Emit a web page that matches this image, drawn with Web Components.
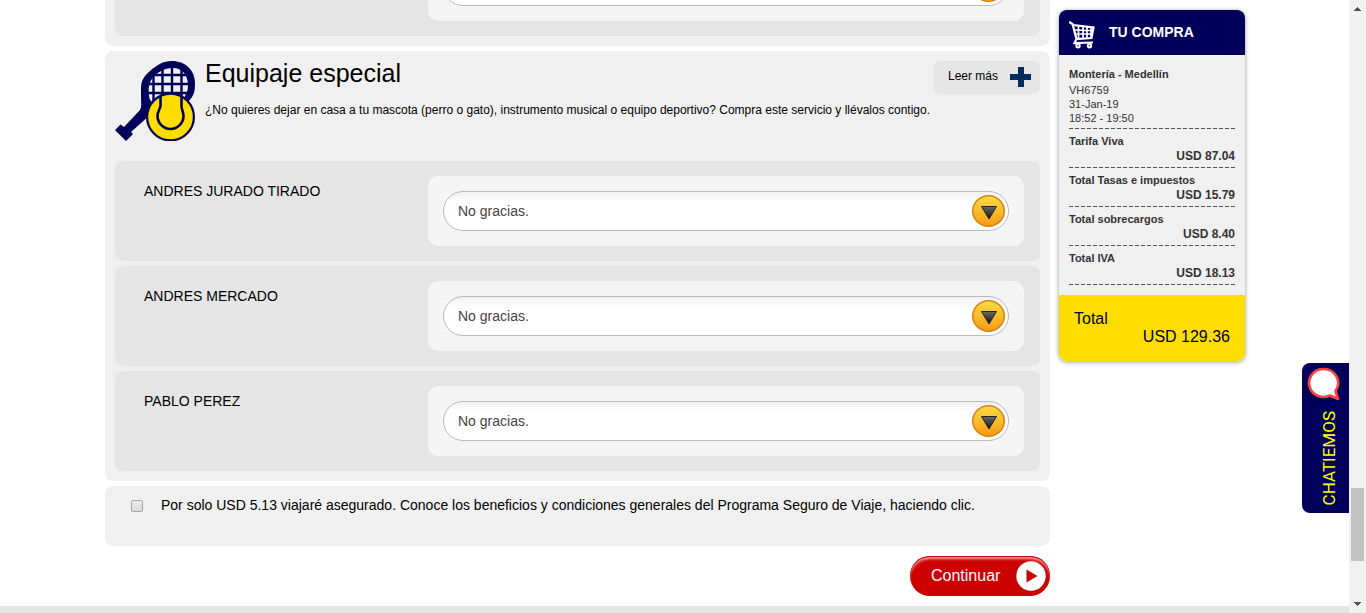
<!DOCTYPE html>
<html lang="es">
<head>
<meta charset="utf-8">
<title>Equipaje especial</title>
<style>
  body { margin: 0; background: #fff; color: #000; font-family: "Liberation Sans", Arial, sans-serif; font-size: 14px; }
</style>
</head>
<body>
<booking-page>
  <service-panel>
    <passenger-row></passenger-row>
  </service-panel>
  <service-panel>
    <service-header slot="header">
      <span slot="title">Equipaje especial</span>
      <span>¿No quieres dejar en casa a tu mascota (perro o gato), instrumento musical o equipo deportivo? Compra este servicio y llévalos contigo.</span>
    </service-header>
    <passenger-row>ANDRES JURADO TIRADO</passenger-row>
    <passenger-row>ANDRES MERCADO</passenger-row>
    <passenger-row>PABLO PEREZ</passenger-row>
  </service-panel>
  <insurance-option>Por solo USD 5.13 viajaré asegurado. Conoce los beneficios y condiciones generales del Programa Seguro de Viaje, haciendo clic.</insurance-option>
  <continue-button>Continuar</continue-button>

  <purchase-summary slot="aside">
    <flight-info>
      <span slot="route">Montería - Medellín</span>
      <div>VH6759</div>
      <div>31-Jan-19</div>
      <div>18:52 - 19:50</div>
    </flight-info>
    <price-line amount="USD 87.04">Tarifa Viva</price-line>
    <price-line amount="USD 15.79">Total Tasas e impuestos</price-line>
    <price-line amount="USD 8.40">Total sobrecargos</price-line>
    <price-line amount="USD 18.13">Total IVA</price-line>
    <span slot="total">USD 129.36</span>
  </purchase-summary>
  <chat-tab slot="chat">CHATIEMOS</chat-tab>
</booking-page>

<script>
function define(name, html, setup) {
  const template = document.createElement('template');
  template.innerHTML = html;
  customElements.define(name, class extends HTMLElement {
    constructor() {
      super();
      this.attachShadow({ mode: 'open' }).append(template.content.cloneNode(true));
    }
    connectedCallback() { if (setup) setup(this, this.shadowRoot); }
  });
}

define('booking-page', `
<style>
  :host { display: flex; height: 100vh; overflow: hidden; }
  .view { flex: 1; min-width: 0; position: relative; display: flex; flex-direction: column; overflow: hidden; }
  .content { display: flex; align-items: flex-start; gap: 9px; padding: 0 104px 10px 105px; flex: none; }
  /* the document is scrolled part of the way down its first panel */
  main { flex: 1; min-width: 0; display: flex; flex-direction: column; gap: 5px; margin-top: -74px; }
  aside { width: 186px; flex: none; margin-top: 10px; }
  footer { flex: 1 0 7px; background: #e5e5e5; }
</style>
<div class="view">
  <div class="content">
    <main><slot></slot></main>
    <aside><slot name="aside"></slot></aside>
  </div>
  <footer></footer>
  <slot name="chat"></slot>
</div>
<page-scroll></page-scroll>`);

define('page-scroll', `
<style>
  :host { display: flex; flex-direction: column; width: 17px; flex: none; background: #f1f1f1; }
  svg { display: block; width: 17px; height: 17px; flex: none; fill: #505050; }
  .before { flex: 471; }
  .thumb { flex: 73; background: #c1c1c1; margin: 0 2px; }
  .after { flex: 35; }
</style>
<svg viewBox="0 0 17 17" shape-rendering="crispEdges"><path d="M8 7h1v1h1v1h1v1h1v1H5v-1h1V9h1V8h1z"/></svg>
<div class="before"></div><div class="thumb"></div><div class="after"></div>
<svg viewBox="0 0 17 17" shape-rendering="crispEdges"><path d="M5 6h7v1h-1v1h-1v1H9v1H8V9H7V8H6V7H5z"/></svg>`);

define('service-panel', `
<style>
  :host { display: flex; flex-direction: column; gap: 5px; padding: 10px; background: #f0f0f0; border-radius: 8px; }
</style>
<slot name="header"></slot><slot></slot>`);

define('service-header', `
<style>
  :host { display: flex; gap: 10px; padding-bottom: 15px; }
  .icon { width: 80px; height: 80px; flex: none; }
  .text { flex: 1; min-width: 0; }
  .top { display: flex; height: 42px; align-items: flex-start; }
  h2 { margin: 0; flex: 1; font-size: 25px; line-height: 24px; font-weight: 400; }
  p { margin: 0; font-size: 12px; line-height: 14px; }
  button { display: flex; align-items: flex-start; justify-content: space-between; width: 107px; height: 33px; padding: 6px 8px 0 15px;
    border: 0; border-radius: 8px; background: #e5e5e5; font: 12px/18px "Liberation Sans", Arial, sans-serif; color: #000; cursor: pointer; }
  button svg { width: 22px; height: 20px; }
</style>
<svg class="icon" viewBox="0 0 80 80" aria-hidden="true">
  <path fill="#00005a" d="M0 69 5.500 63.500 9 66 25 49C27 45 26 42 26 37V27C26 20 29 15 35 10 42 4 48 0 57 0 70 0 80 9 80 22 80 31 79 34 74 40L35 54 16 71 18 73 11 80 7 76Z"/>
  <path fill="#f0f0f0" d="M34 35C33 28 34 22 37 18 42 11 49 7 58 7 67 7 73 14 73 24 73 29 72 32 69 37L38 42C36 40 34 38 34 35Z"/>
  <path fill="none" stroke="#00005a" stroke-width="2.400" d="M38.500 13V41M47.500 7V37M57 6V37M66.500 8V37M40 14H73M34 23H75M33 32H75"/>
  <circle cx="55.500" cy="56" r="23.400" fill="#fd0" stroke="#00005a" stroke-width="2.200"/>
  <path fill="none" stroke="#00005a" stroke-width="2.600" d="M45.500 34.500V45C44.500 49 42.500 51 42.500 55A13 13 0 0 0 68.500 55C68.500 51 66.500 49 66.500 45V35"/>
</svg>
<div class="text">
  <div class="top">
    <h2><slot name="title"></slot></h2>
    <button type="button">Leer más
      <svg viewBox="0 0 22 20" aria-hidden="true"><path fill="#002d5b" d="M8 0h6v7h7v6h-7v7H8v-7H0V7h8z"/></svg>
    </button>
  </div>
  <p><slot></slot></p>
</div>`);

define('passenger-row', `
<style>
  :host { display: flex; padding: 15px 16px 15px 29px; background: #e5e5e5; border-radius: 8px; }
  label { width: 284px; flex: none; padding-top: 7px; font-size: 14px; line-height: 16px; }
  .box { flex: 1; min-width: 0; padding: 15px; background: #f5f5f5; border-radius: 10px; }
  .field { position: relative; }
  select { display: block; appearance: none; box-sizing: border-box; width: 100%; height: 40px; margin: 0; padding: 0 50px 0 14px;
    border: 1px solid #bbb; border-radius: 20px; background: linear-gradient(#f1f1f1, #fff 10px);
    font: 14px "Liberation Sans", Arial, sans-serif; color: #444; }
  svg { position: absolute; right: 3px; top: 3px; width: 34px; height: 34px; pointer-events: none; }
</style>
<label for="option"><slot></slot></label>
<div class="box"><div class="field">
  <select id="option"><option>No gracias.</option></select>
  <svg viewBox="0 0 34 34" aria-hidden="true">
    <defs>
      <linearGradient id="gold" x2="0" y2="1"><stop stop-color="#fbdc45"/><stop offset="1" stop-color="#f79a13"/></linearGradient>
      <linearGradient id="dark" x2="0" y2="1"><stop stop-color="#6a6a6a"/><stop offset="1" stop-color="#111"/></linearGradient>
    </defs>
    <ellipse cx="16.500" cy="17" rx="15.800" ry="15.300" fill="url(#gold)" stroke="#d98010" stroke-width="1.500"/>
    <path d="M9.500 12.500H24.500L17 25Z" fill="url(#dark)" stroke="#222" stroke-width="1"/>
  </svg>
</div></div>`);

define('insurance-option', `
<style>
  :host { display: flex; box-sizing: border-box; height: 60px; padding: 11px 26px; background: #f0f0f0; border-radius: 8px; }
  input { appearance: none; box-sizing: border-box; width: 12px; height: 12px; margin: 3px 18px 0 0; flex: none;
    border: 1px solid #a5a5a5; border-radius: 2px; background: linear-gradient(#ececec, #dadada); }
  input:checked { background: #00005a; }
  label { font-size: 14px; line-height: 16px; }
</style>
<input type="checkbox" id="insured"><label for="insured"><slot></slot></label>`);

define('continue-button', `
<style>
  :host { display: flex; justify-content: flex-end; padding-top: 5px; }
  button { display: flex; align-items: center; justify-content: space-between; width: 140px; height: 40px; padding: 0 4px 0 21px;
    border: 0; border-radius: 20px; background: #c00; color: #fff; font: 16px "Liberation Sans", Arial, sans-serif; cursor: pointer;
    box-shadow: inset 0 1px 0 #c00, inset 0 4px 3px -1px #f0a0a0; }
  svg { width: 30px; height: 30px; }
</style>
<button type="button"><slot></slot>
  <svg viewBox="0 0 30 30" aria-hidden="true"><circle cx="15" cy="15" r="14.700" fill="#fff"/><path d="M10.500 8.500V21.500L21.500 15Z" fill="#c00"/></svg>
</button>`);

define('purchase-summary', `
<style>
  :host { display: block; overflow: hidden; border-radius: 8px; background: #f0f0f0; color: #333; box-shadow: 0 1px 5px rgba(0,0,0,.4); }
  header { display: flex; align-items: flex-start; gap: 14px; box-sizing: border-box; height: 45px; padding: 11px 0 0 10px; background: #00005a; color: #fff; }
  h3 { margin: 0; font-size: 14px; line-height: 22px; }
  header svg { width: 26px; height: 28px; flex: none; }
  .lines { padding: 12px 10px 10px; }
  .total { padding: 15px; background: #fd0; color: #000033; font-size: 16px; line-height: 18px; }
  .total div + div { text-align: right; }
</style>
<header>
  <svg viewBox="0 0 26 28" fill="none" stroke="#fff" stroke-width="1.700" aria-hidden="true">
    <path stroke-width="2.200" d="M0 1 3.500 3 7.500 18 22.500 17 24.500 6.500 4 4M7.500 18 5.500 22 24 21.500"/>
    <path d="M5 9 24 9.500M6 13 24 13M9.500 5V18M14 5.500V17.500M18 6V17M22 6V16.500"/>
    <circle cx="9" cy="24.800" r="1.700" stroke-width="2"/><circle cx="20.500" cy="24.800" r="1.700" stroke-width="2"/>
  </svg>
  <h3>TU COMPRA</h3>
</header>
<div class="lines"><slot></slot></div>
<div class="total"><div>Total</div><div><slot name="total"></slot></div></div>`);

const dashed = 'background: repeating-linear-gradient(90deg, #555 0 4px, transparent 4px 6px) bottom / 100% 1px no-repeat;';

define('flight-info', `
<style>
  :host { display: block; padding-bottom: 4px; font-size: 11px; line-height: 14px; ${dashed} }
  strong { display: block; margin-bottom: 2px; }
</style>
<strong><slot name="route"></slot></strong><slot></slot>`);

define('price-line', `
<style>
  :host { display: block; padding: 5px 0 4px; font-weight: 700; ${dashed} }
  .label { font-size: 11px; line-height: 14px; }
  .amount { font-size: 12px; line-height: 16px; text-align: right; }
</style>
<div class="label"><slot></slot></div><div class="amount"></div>`,
(host, root) => { root.querySelector('.amount').textContent = host.getAttribute('amount'); });

define('chat-tab', `
<style>
  :host { position: absolute; right: 0; top: 363px; }
  button { display: flex; flex-direction: column; align-items: center; justify-content: space-between; width: 47px; height: 150px;
    padding: 4px 0 8px; border: 0; border-radius: 8px 0 0 8px; background: #00005a; color: #ff0; cursor: pointer;
    font: 17px/28px "Liberation Sans Narrow", Roboto, sans-serif; }
  svg { width: 34px; height: 34px; margin-right: 5px; flex: none; }
  span { writing-mode: vertical-rl; transform: rotate(180deg); margin-left: 6px; }
</style>
<button type="button">
  <svg viewBox="0 0 34 34" aria-hidden="true"><path d="M16.500 2A14.500 14 0 1 0 24 28.500L32 32 29.500 24A14.500 14 0 0 0 16.500 2Z" fill="#fff" stroke="#ff4040" stroke-width="2.600" stroke-linejoin="round"/></svg>
  <span><slot></slot></span>
</button>`);
</script>
</body>
</html>
